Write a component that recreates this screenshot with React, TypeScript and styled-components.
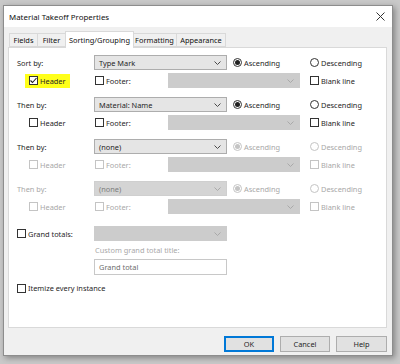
import styled, { createGlobalStyle } from "styled-components";

const GlobalStyle = createGlobalStyle`
  html, body { margin: 0; padding: 0; }
  body {
    width: 400px;
    height: 364px;
    overflow: hidden;
    background: #c9c9c9;
    font-family: "Noto Sans", "Open Sans", sans-serif;
    font-size: 7.4px;
    color: #262626;
  }
`;

type Sort = {
  label: string;
  value: string;
  labelOff?: boolean;
  comboOff?: boolean;
  optsOff?: boolean;
  header?: boolean;
  mark?: boolean;
};

const sorts: Sort[] = [
  { label: "Sort by:", value: "Type Mark", header: true, mark: true },
  { label: "Then by:", value: "Material: Name" },
  { label: "Then by:", value: "(none)", optsOff: true },
  { label: "Then by:", value: "(none)", labelOff: true, comboOff: true, optsOff: true },
];

const tabs = [
  { name: "Fields", w: 29 },
  { name: "Filter", w: 29 },
  { name: "Sorting/Grouping", w: 69, active: true },
  { name: "Formatting", w: 45 },
  { name: "Appearance", w: 50 },
];

function Chevron({ off }: { off?: boolean }) {
  return (
    <svg width="7" height="4" viewBox="0 0 7 4">
      <polyline points="0.5,0.5 3.5,3.5 6.5,0.5" fill="none" stroke={off ? "#a9a9a9" : "#4a4a4a"} strokeWidth="1" />
    </svg>
  );
}

function Check({ checked, off }: { checked?: boolean; off?: boolean }) {
  return (
    <Box $off={off}>
      {checked && (
        <svg width="7" height="7" viewBox="0 0 7 7">
          <polyline points="0.5,3.5 2.5,5.5 6.5,1" fill="none" stroke="#222" strokeWidth="1.1" />
        </svg>
      )}
    </Box>
  );
}

function Combo({ value, off, width }: { value?: string; off?: boolean; width: number }) {
  return (
    <Select $off={off} $w={width} $empty={!value}>
      <span>{value}</span>
      <Chevron off={off || !value} />
    </Select>
  );
}

export default function App() {
  return (
    <>
      <GlobalStyle />
      <Dialog>
        <TitleBar>
          <Title>Material Takeoff Properties</Title>
          <svg width="9" height="9" viewBox="0 0 9 9">
            <path d="M0.5 0.5 L8.5 8.5 M8.5 0.5 L0.5 8.5" stroke="#333" strokeWidth="1" />
          </svg>
        </TitleBar>
        <Tabs>
          {tabs.map((t) => (
            <Tab key={t.name} $active={t.active} $w={t.w}>
              {t.name}
            </Tab>
          ))}
        </Tabs>
        <Panel>
          {sorts.map((s, i) => (
            <Block key={i} $first={i === 0}>
              <Row>
                <Label $off={s.labelOff}>{s.label}</Label>
                <Combo value={s.value} off={s.comboOff} width={133} />
                <RadioItem $w={77} $off={s.optsOff}>
                  <Radio $off={s.optsOff} $on />
                  Ascending
                </RadioItem>
                <RadioItem $off={s.optsOff}>
                  <Radio $off={s.optsOff} />
                  Descending
                </RadioItem>
              </Row>
              <OptionRow>
                <CheckItem $w={66} $off={s.optsOff}>
                  {s.mark ? (
                    <Marker>
                      <Check checked={s.header} />
                      Header
                    </Marker>
                  ) : (
                    <>
                      <Check off={s.optsOff} />
                      Header
                    </>
                  )}
                </CheckItem>
                <CheckItem $w={73} $off={s.optsOff}>
                  <Check off={s.optsOff} />
                  Footer:
                </CheckItem>
                <Combo off width={132} />
                <CheckItem $off={s.optsOff} $ml={10}>
                  <Check off={s.optsOff} />
                  Blank line
                </CheckItem>
              </OptionRow>
            </Block>
          ))}
          <TotalsRow>
            <CheckItem $w={77}>
              <Check />
              Grand totals:
            </CheckItem>
            <Combo off width={133} />
          </TotalsRow>
          <Hint>Custom grand total title:</Hint>
          <TextBox>Grand total</TextBox>
          <ItemizeRow>
            <CheckItem>
              <Check />
              Itemize every instance
            </CheckItem>
          </ItemizeRow>
        </Panel>
        <Footer>
          <Button $default>OK</Button>
          <Button>Cancel</Button>
          <Button $w={51}>Help</Button>
        </Footer>
      </Dialog>
    </>
  );
}

const Dialog = styled.div`
  margin: 5px 0 0 3px;
  width: 388px;
  height: 349px;
  display: flex;
  flex-direction: column;
  background: #f0f0f0;
  border: 1px solid #8d8d8d;
  box-shadow: 2px 2px 6px rgba(0, 0, 0, 0.35);
`;

const TitleBar = styled.div`
  height: 21px;
  display: flex;
  align-items: center;
  justify-content: space-between;
  padding: 0 7px 0 5px;
  background: #ffffff;
`;

const Title = styled.span`
  font-size: 7.9px;
  color: #111;
`;

const Tabs = styled.div`
  height: 16px;
  margin-top: 4px;
  padding-left: 6px;
  display: flex;
  align-items: flex-end;
`;

const Tab = styled.div<{ $active?: boolean; $w: number }>`
  position: relative;
  z-index: ${(p) => (p.$active ? 2 : 1)};
  width: ${(p) => p.$w}px;
  height: ${(p) => (p.$active ? 17 : 14)}px;
  margin: 0 ${(p) => (p.$active ? -1 : 0)}px ${(p) => (p.$active ? -1 : 0)}px -1px;
  display: flex;
  align-items: center;
  justify-content: center;
  box-sizing: border-box;
  background: ${(p) => (p.$active ? "#ffffff" : "#f0f0f0")};
  border: 1px solid #d9d9d9;
  border-bottom: ${(p) => (p.$active ? "none" : "1px solid #d9d9d9")};
  color: #111;
`;

const Panel = styled.div`
  position: relative;
  z-index: 1;
  margin: 0 5px 0 4px;
  height: 281px;
  box-sizing: border-box;
  padding: 7px 0 0 8px;
  background: #ffffff;
  border: 1px solid #d9d9d9;
  display: flex;
  flex-direction: column;
`;

const Block = styled.div<{ $first?: boolean }>`
  margin-top: ${(p) => (p.$first ? 0 : 9)}px;
  display: flex;
  flex-direction: column;
  gap: 3px;
`;

const Row = styled.div`
  height: 15px;
  display: flex;
  align-items: center;
`;

const OptionRow = styled(Row)`
  padding-left: 12px;
`;

const TotalsRow = styled(Row)`
  margin-top: 12px;
`;

const ItemizeRow = styled(Row)`
  margin-top: 7px;
  height: 12px;
`;

const Label = styled.span<{ $off?: boolean }>`
  width: 77px;
  color: ${(p) => (p.$off ? "#a8a8a8" : "#262626")};
`;

const Select = styled.div<{ $off?: boolean; $w: number; $empty?: boolean }>`
  width: ${(p) => p.$w}px;
  height: 15px;
  box-sizing: border-box;
  padding: 0 5px 0 4px;
  display: flex;
  align-items: center;
  justify-content: space-between;
  background: ${(p) => (p.$empty ? "#cccccc" : p.$off ? "#d4d4d4" : "#e5e5e5")};
  border: 1px solid ${(p) => (p.$empty ? "#cccccc" : p.$off ? "#cfcfcf" : "#adadad")};
  color: ${(p) => (p.$off ? "#7d7d7d" : "#262626")};
`;

const RadioItem = styled.label<{ $w?: number; $off?: boolean }>`
  ${(p) => (p.$w ? `width: ${p.$w}px;` : "")}
  margin-left: ${(p) => (p.$w ? 6 : 0)}px;
  display: flex;
  align-items: center;
  gap: 2px;
  color: ${(p) => (p.$off ? "#a8a8a8" : "#262626")};
`;

const Radio = styled.span<{ $off?: boolean; $on?: boolean }>`
  width: 9px;
  height: 9px;
  box-sizing: border-box;
  border-radius: 50%;
  border: 1px solid ${(p) => (p.$off ? "#c4c4c4" : "#333")};
  background: #fff;
  display: flex;
  align-items: center;
  justify-content: center;
  &::after {
    content: "";
    display: ${(p) => (p.$on ? "block" : "none")};
    width: 5px;
    height: 5px;
    border-radius: 50%;
    background: ${(p) => (p.$off ? "#c4c4c4" : "#222")};
  }
`;

const CheckItem = styled.label<{ $w?: number; $off?: boolean; $ml?: number }>`
  ${(p) => (p.$w ? `width: ${p.$w}px;` : "")}
  margin-left: ${(p) => p.$ml ?? 0}px;
  display: flex;
  align-items: center;
  gap: 2px;
  color: ${(p) => (p.$off ? "#a8a8a8" : "#262626")};
`;

const Box = styled.span<{ $off?: boolean }>`
  width: 9px;
  height: 9px;
  box-sizing: border-box;
  border: 1px solid ${(p) => (p.$off ? "#c4c4c4" : "#333")};
  background: #fff;
  display: flex;
  align-items: center;
  justify-content: center;
`;

const Marker = styled.span`
  display: flex;
  align-items: center;
  gap: 2px;
  margin-left: -4px;
  padding: 2px 4px 2px 4px;
  background: #ffff1a;
`;

const Hint = styled.div`
  margin: 3px 0 0 78px;
  height: 12px;
  line-height: 12px;
  color: #a8a8a8;
`;

const TextBox = styled.div`
  margin: 3px 0 0 77px;
  width: 133px;
  height: 16px;
  box-sizing: border-box;
  padding-left: 4px;
  display: flex;
  align-items: center;
  border: 1px solid #c8c8c8;
  color: #6d6d6d;
  background: #fff;
`;

const Footer = styled.div`
  flex: 1;
  display: flex;
  justify-content: flex-end;
  align-items: flex-start;
  gap: 6px;
  padding: 8px 5px 0 0;
`;

const Button = styled.button<{ $default?: boolean; $w?: number }>`
  width: ${(p) => p.$w ?? 50}px;
  height: 16px;
  padding: 0;
  font-family: inherit;
  font-size: 7.4px;
  color: #262626;
  background: #e1e1e1;
  border: 1px solid ${(p) => (p.$default ? "#0078d7" : "#adadad")};
  box-shadow: ${(p) => (p.$default ? "inset 0 0 0 1px #0078d7" : "none")};
`;
